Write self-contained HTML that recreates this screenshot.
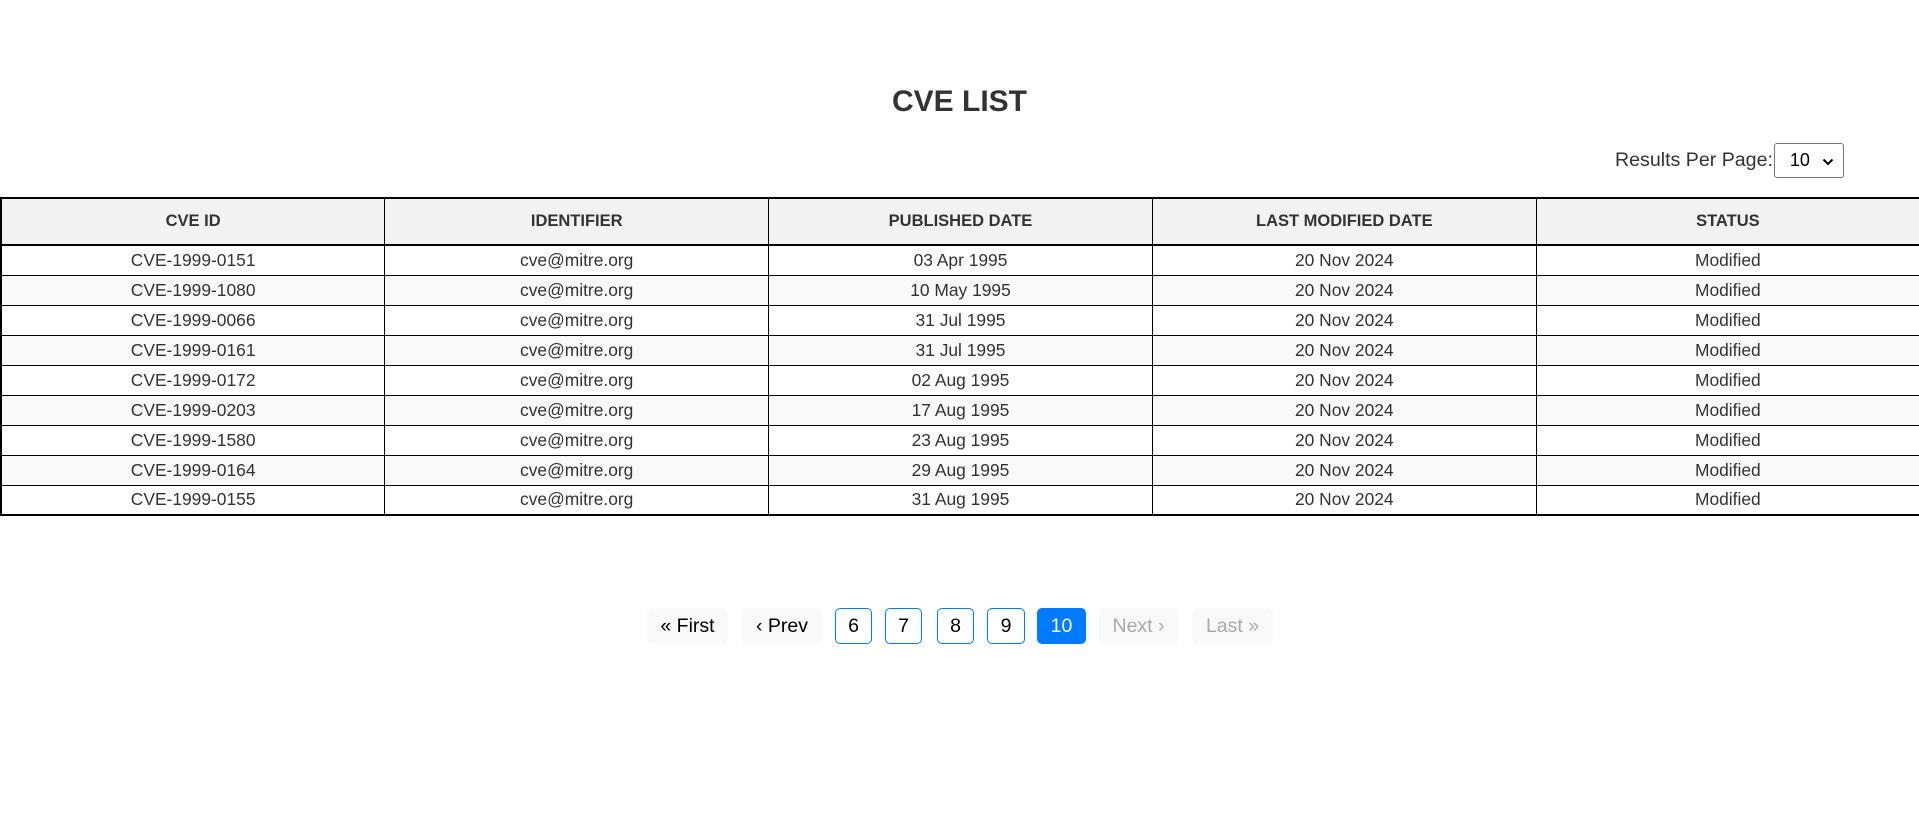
<!DOCTYPE html>
<html><head><meta charset="utf-8"><style>
*{box-sizing:border-box}
body{margin:0;width:1919px;height:839px;background:#fff;font-family:"Liberation Sans",Arial,sans-serif;color:#333;overflow:hidden;position:relative}
h1{position:absolute;top:84px;left:0;width:1919px;text-align:center;margin:0;font-size:30px;font-weight:bold;color:#333;line-height:36px}
.rpp{position:absolute;top:143px;left:1615px;height:35px;display:flex;align-items:center;font-size:19.6px;color:#333}
.sel{width:70px;height:35px;border:1px solid #767676;border-radius:3px;margin-left:1px;display:flex;align-items:center;padding-left:15px;font-size:18px;color:#000;position:relative}
.sel svg{position:absolute;right:9px;top:14px}
table{position:absolute;top:197px;left:0;width:1921px;border-collapse:collapse;border:2px solid #000;table-layout:fixed}
th{background:#f2f2f2;height:47px;font-size:16.5px;font-weight:bold;border:1px solid #000;border-bottom:2px solid #000;color:#333}
td{height:30px;font-size:17.4px;text-align:center;border:1px solid #000;color:#333;padding:0;background:#fff}
tr:nth-child(odd) td{background:#f9f9f9}
.pg{position:absolute;top:608px;left:0;height:36px}
.b{position:absolute;top:0;height:36px;border-radius:5px;display:flex;align-items:center;justify-content:center;font-size:19.5px;color:#000;background:#f9f9f9}
.n{background:#fff;border:1px solid #007bff}
.a{background:#007bff;color:#fff}
.d{color:#aaa}
</style></head><body>
<h1>CVE LIST</h1>
<div class="rpp">Results Per Page:<div class="sel">10<svg width="12" height="8" viewBox="0 0 12 8"><path d="M1.5 1.5 L6 6 L10.5 1.5" stroke="#000" stroke-width="2" fill="none"/></svg></div></div>
<table>
<tr><th>CVE ID</th><th>IDENTIFIER</th><th>PUBLISHED DATE</th><th>LAST MODIFIED DATE</th><th>STATUS</th></tr>
<tr><td>CVE-1999-0151</td><td>cve@mitre.org</td><td>03 Apr 1995</td><td>20 Nov 2024</td><td>Modified</td></tr>
<tr><td>CVE-1999-1080</td><td>cve@mitre.org</td><td>10 May 1995</td><td>20 Nov 2024</td><td>Modified</td></tr>
<tr><td>CVE-1999-0066</td><td>cve@mitre.org</td><td>31 Jul 1995</td><td>20 Nov 2024</td><td>Modified</td></tr>
<tr><td>CVE-1999-0161</td><td>cve@mitre.org</td><td>31 Jul 1995</td><td>20 Nov 2024</td><td>Modified</td></tr>
<tr><td>CVE-1999-0172</td><td>cve@mitre.org</td><td>02 Aug 1995</td><td>20 Nov 2024</td><td>Modified</td></tr>
<tr><td>CVE-1999-0203</td><td>cve@mitre.org</td><td>17 Aug 1995</td><td>20 Nov 2024</td><td>Modified</td></tr>
<tr><td>CVE-1999-1580</td><td>cve@mitre.org</td><td>23 Aug 1995</td><td>20 Nov 2024</td><td>Modified</td></tr>
<tr><td>CVE-1999-0164</td><td>cve@mitre.org</td><td>29 Aug 1995</td><td>20 Nov 2024</td><td>Modified</td></tr>
<tr><td>CVE-1999-0155</td><td>cve@mitre.org</td><td>31 Aug 1995</td><td>20 Nov 2024</td><td>Modified</td></tr>
</table>
<div class="pg">
<div class="b" style="left:647px;width:81px">« First</div>
<div class="b" style="left:742px;width:80px">‹ Prev</div>
<div class="b n" style="left:835px;width:37px">6</div>
<div class="b n" style="left:885px;width:37px">7</div>
<div class="b n" style="left:937px;width:37px">8</div>
<div class="b n" style="left:987px;width:38px">9</div>
<div class="b a" style="left:1037px;width:49px">10</div>
<div class="b d" style="left:1099px;width:79px">Next ›</div>
<div class="b d" style="left:1192px;width:81px">Last »</div>
</div>
</body></html>
